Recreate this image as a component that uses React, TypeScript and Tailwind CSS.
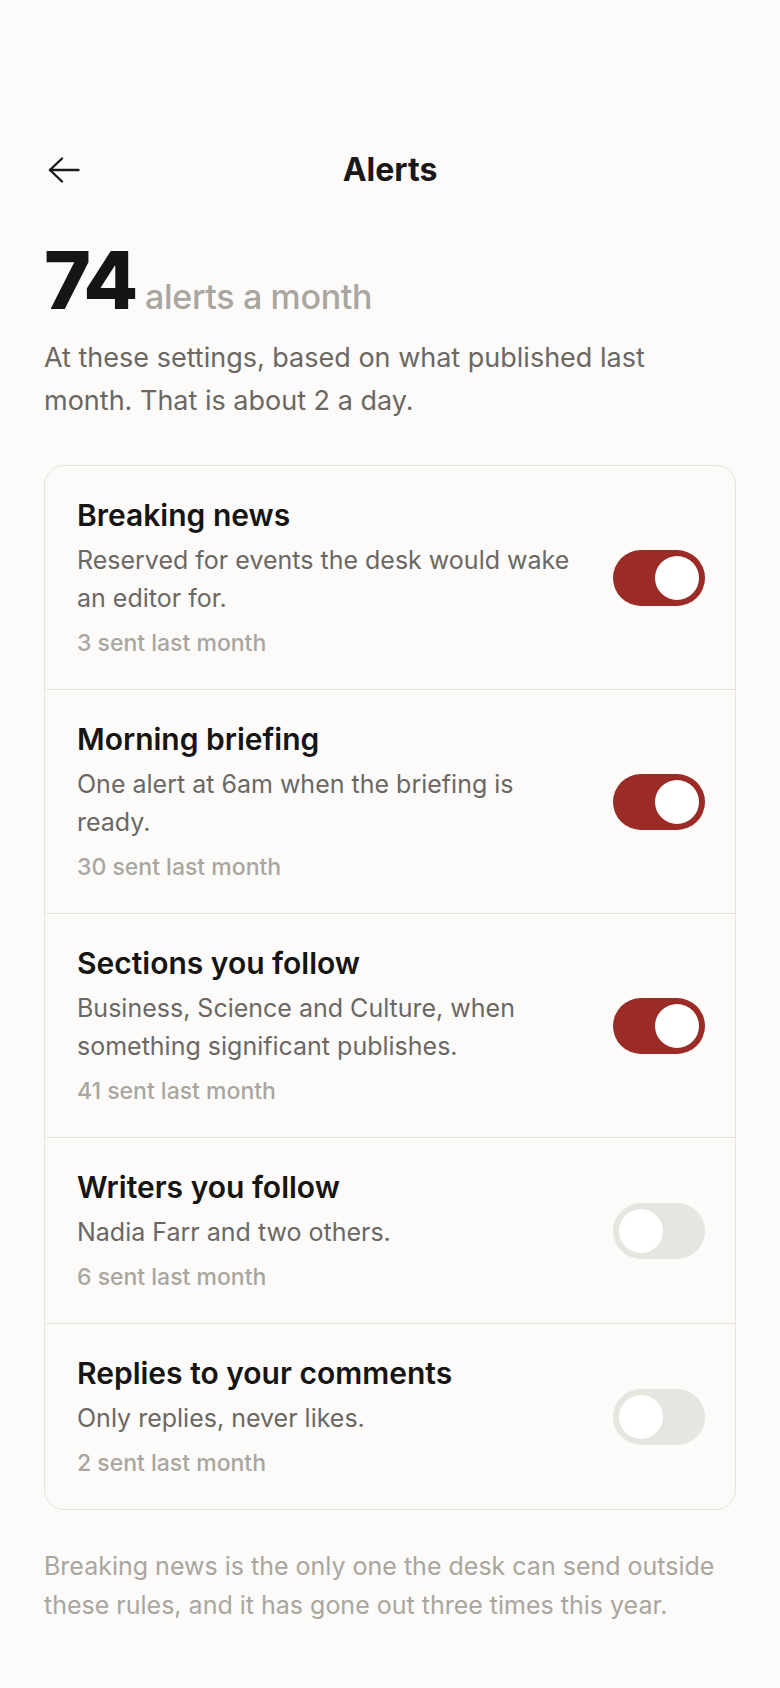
import React, { useState } from 'react';

type Alert = {
  id: string;
  title: string;
  description: string;
  sent: number;
  enabled: boolean;
};

const initialAlerts: Alert[] = [
  { id: 'breaking', title: 'Breaking news', description: 'Reserved for events the desk would wake an editor for.', sent: 3, enabled: true },
  { id: 'briefing', title: 'Morning briefing', description: 'One alert at 6am when the briefing is ready.', sent: 30, enabled: true },
  { id: 'sections', title: 'Sections you follow', description: 'Business, Science and Culture, when something significant publishes.', sent: 41, enabled: true },
  { id: 'writers', title: 'Writers you follow', description: 'Nadia Farr and two others.', sent: 6, enabled: false },
  { id: 'replies', title: 'Replies to your comments', description: 'Only replies, never likes.', sent: 2, enabled: false },
];

const BackArrow: React.FC<{ className?: string }> = ({ className }) => (
  <svg viewBox="0 0 32 26" fill="none" stroke="currentColor" strokeWidth="2.4" strokeLinecap="round" strokeLinejoin="round" className={className}>
    <path d="M14 1.5 2 13l12 11.5" />
    <path d="M2 13h28.5" />
  </svg>
);

const Toggle: React.FC<{ on: boolean; onChange: () => void; label: string }> = ({ on, onChange, label }) => (
  <button
    type="button"
    role="switch"
    aria-checked={on}
    aria-label={label}
    onClick={onChange}
    className={`flex h-[56px] w-[92px] shrink-0 items-center rounded-full p-[6px] transition-colors ${on ? 'justify-end bg-[#9a2b27]' : 'justify-start bg-[#e7e5e0]'}`}
  >
    <span className="block h-[44px] w-[44px] rounded-full bg-white" />
  </button>
);

export default function App() {
  const [alerts, setAlerts] = useState<Alert[]>(initialAlerts);

  const toggle = (id: string) =>
    setAlerts(prev => prev.map(a => (a.id === id ? { ...a, enabled: !a.enabled } : a)));

  return (
    <div className="min-h-[1688px] bg-[#fcfbf9] px-[44px] pt-[146px] pb-16 font-['Inter','Noto_Sans',sans-serif] text-[#1a1918]">
      <header className="relative flex h-[48px] items-center justify-center">
        <button type="button" aria-label="Back" className="absolute left-[4px] top-1/2 -translate-y-1/2 text-[#1a1918]">
          <BackArrow className="h-[26px] w-[32px]" />
        </button>
        <h1 className="text-[32px] font-bold leading-none">Alerts</h1>
      </header>

      <div className="mt-[46px] flex items-baseline gap-[10px]">
        <span className="text-[80px] font-extrabold leading-[80px] tracking-[-0.04em] text-[#161514]">74</span>
        <span className="text-[34px] font-medium tracking-[-0.01em] text-[#a9a6a0]">alerts a month</span>
      </div>
      <p className="mt-[14px] text-[27px] leading-[43px] text-[#6b6864]">
        At these settings, based on what published last month. That is about 2 a day.
      </p>

      <div className="mt-[43px] divide-y divide-[#e6e3de] rounded-[20px] border border-[#e6e3de]">
        {alerts.map(a => (
          <div key={a.id} className="flex items-center gap-8 pl-8 pr-[30px] pt-8 pb-[31px]">
            <div className="min-w-0 flex-1">
              <h2 className="text-[30px] font-semibold leading-[34px] text-[#161514]">{a.title}</h2>
              <p className="mt-[9px] text-[25px] leading-[38px] text-[#6b6864]">{a.description}</p>
              <p className="mt-[11px] text-[23px] font-medium leading-[30px] text-[#a9a6a0]">{a.sent} sent last month</p>
            </div>
            <Toggle on={a.enabled} onChange={() => toggle(a.id)} label={a.title} />
          </div>
        ))}
      </div>

      <p className="mt-[37px] text-[25px] leading-[39px] text-[#a9a6a0]">
        Breaking news is the only one the desk can send outside these rules, and it has gone out three times this year.
      </p>
    </div>
  );
}
